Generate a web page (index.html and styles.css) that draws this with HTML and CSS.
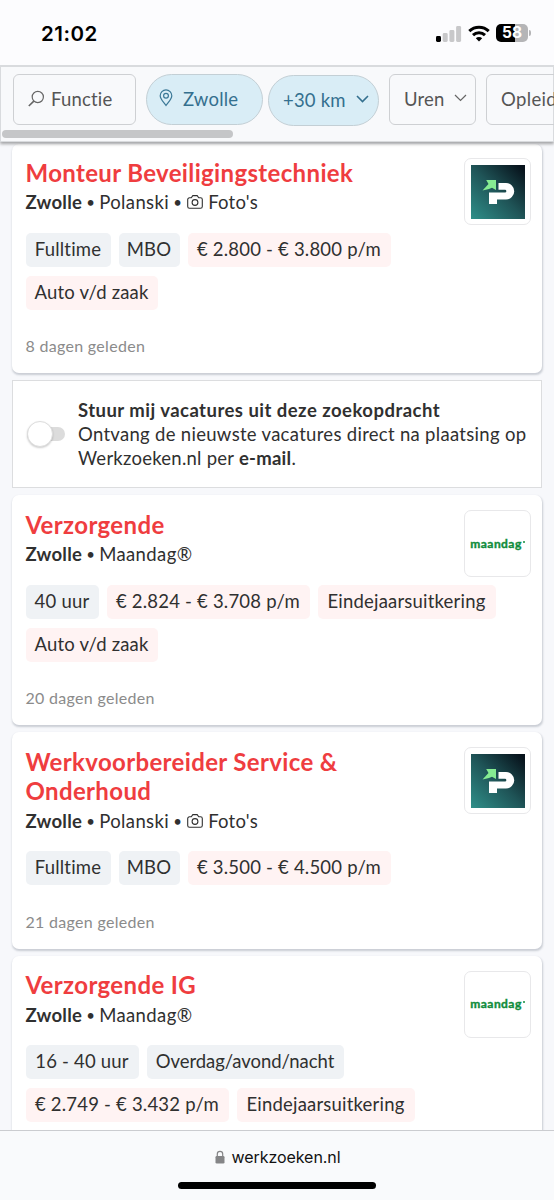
FILE: index.html
```
<!DOCTYPE html>
<html lang="nl">
<head>
<meta charset="utf-8">
<title>Werkzoeken.nl</title>
<link rel="stylesheet" href="styles.css">
</head>
<body>
<svg width="0" height="0" class="defs">
  <defs>
    <linearGradient id="teal" x1="0" y1="1" x2="1" y2="0"><stop offset="0" stop-color="#2f8f89"/><stop offset=".5" stop-color="#1f5457"/><stop offset=".95" stop-color="#07121b"/></linearGradient>
    <symbol id="polanski" viewBox="0 0 54 54"><rect width="54" height="54" fill="url(#teal)"/><path d="M11.500 25.500 17.500 19l-2.300-4H25v10l-4-2.200-3 1.200z" fill="#86ec92"/><path d="M27.500 18H35a8 8 0 0 1 0 16.500h-9V39h-8V27.500h16a1.300 1.300 0 0 0 0-2.700h-6.500z" fill="#fff"/></symbol>
    <symbol id="camera" viewBox="0 0 16 16"><g fill="none" stroke="currentColor" stroke-width="1.100" stroke-linejoin="round"><path d="M2.500 3.800h1.800L5.800 1.600h4.400l1.500 2.200h1.800a1.800 1.800 0 0 1 1.800 1.800v6.800a1.800 1.800 0 0 1-1.800 1.800h-11a1.800 1.800 0 0 1-1.800-1.800V5.600a1.800 1.800 0 0 1 1.800-1.800z"/><circle cx="8" cy="8.500" r="2.900"/></g></symbol>
  </defs>
</svg>
<div class="phone">
  <header class="status">
    <span class="clock">21:02</span>
    <div class="indicators">
      <svg width="26" height="17" viewBox="0 0 26 17"><rect x="0" y="11" width="5" height="6" rx="1.400" fill="#000"/><g fill="#c8c8ca"><rect x="6.700" y="8" width="5" height="9" rx="1.400"/><rect x="13.400" y="5" width="5" height="12" rx="1.400"/><rect x="20.100" y="1" width="5" height="16" rx="1.400"/></g></svg>
      <svg width="22" height="17" viewBox="0 0 22 17"><g fill="none" stroke="#000" stroke-width="3"><path d="M1.300 6.200a14 14 0 0 1 19.400 0"/><path d="M5 10.200a8.700 8.700 0 0 1 12 0"/></g><path d="M7.800 13.300a4.600 4.600 0 0 1 6.400 0L11 16.600z"/></svg>
      <div class="battery"><span>58</span></div>
    </div>
  </header>
  <nav class="filters">
    <div class="filter f-functie"><svg width="18" height="18" viewBox="0 0 18 18" fill="none" stroke="#666" stroke-width="1.200"><circle cx="10.800" cy="7" r="5.600"/><path d="m6.800 11.200-5 4.800" stroke-width="1.600"/></svg><span>Functie</span></div>
    <div class="filter pill f-plaats"><svg width="14" height="18" viewBox="0 0 14 18" fill="none" stroke="#3b7897" stroke-width="1.200"><path d="M7 16.500C4.500 13 1.200 10 1.200 6.700a5.800 5.800 0 0 1 11.600 0C12.800 10 9.500 13 7 16.500z"/><circle cx="7" cy="6.700" r="2.400"/></svg><span>Zwolle</span></div>
    <div class="filter pill f-km"><span>+30 km</span><svg width="13" height="8" viewBox="0 0 13 8" fill="none" stroke="#34708f" stroke-width="1.600"><path d="m1 1 5.500 5.500L12 1"/></svg></div>
    <div class="filter f-uren"><span>Uren</span><svg width="13" height="8" viewBox="0 0 13 8" fill="none" stroke="#666" stroke-width="1.200"><path d="m1 1 5.500 5.500L12 1"/></svg></div>
    <div class="filter f-opl"><span>Opleiding</span></div>
    <i class="scroll"></i>
  </nav>
  <main class="list">
    <article class="card">
      <div class="logo"><svg width="54" height="54"><use href="#polanski"/></svg></div>
      <h2>Monteur Beveiligingstechniek</h2>
      <p class="meta"><b>Zwolle</b><i>•</i><span>Polanski</span><i>•</i><svg width="16" height="16"><use href="#camera"/></svg><span>Foto's</span></p>
      <div class="tags"><span class="tag w-full">Fulltime</span><span class="tag w-mbo">MBO</span><span class="tag pink w-pay">€ 2.800 - € 3.800 p/m</span><span class="tag pink w-auto">Auto v/d zaak</span></div>
      <time>8 dagen geleden</time>
    </article>
    <section class="alert">
      <div class="switch"></div>
      <p><b class="lead">Stuur mij vacatures uit deze zoekopdracht</b><br>Ontvang de nieuwste vacatures direct na plaatsing op<br><span class="tight">Werkzoeken.nl per <b>e-mail</b>.</span></p>
    </section>
    <article class="card">
      <div class="logo brand"><span>maandag</span><i></i></div>
      <h2>Verzorgende</h2>
      <p class="meta"><b>Zwolle</b><i>•</i><span>Maandag®</span></p>
      <div class="tags"><span class="tag w-40">40 uur</span><span class="tag pink w-pay">€ 2.824 - € 3.708 p/m</span><span class="tag pink w-eind">Eindejaarsuitkering</span><span class="tag pink w-auto">Auto v/d zaak</span></div>
      <time>20 dagen geleden</time>
    </article>
    <article class="card">
      <div class="logo"><svg width="54" height="54"><use href="#polanski"/></svg></div>
      <h2>Werkvoorbereider Service &amp;<br>Onderhoud</h2>
      <p class="meta"><b>Zwolle</b><i>•</i><span>Polanski</span><i>•</i><svg width="16" height="16"><use href="#camera"/></svg><span>Foto's</span></p>
      <div class="tags"><span class="tag w-full">Fulltime</span><span class="tag w-mbo">MBO</span><span class="tag pink w-pay">€ 3.500 - € 4.500 p/m</span></div>
      <time>21 dagen geleden</time>
    </article>
    <article class="card last">
      <div class="logo brand"><span>maandag</span><i></i></div>
      <h2>Verzorgende IG</h2>
      <p class="meta"><b>Zwolle</b><i>•</i><span>Maandag®</span></p>
      <div class="tags"><span class="tag w-1640">16 - 40 uur</span><span class="tag w-dag">Overdag/avond/nacht</span><span class="tag pink w-pay">€ 2.749 - € 3.432 p/m</span><span class="tag pink w-eind">Eindejaarsuitkering</span></div>
    </article>
  </main>
  <footer class="browser">
    <div class="address"><svg width="10" height="14" viewBox="0 0 10 14"><path d="M2.300 7V4a2.700 2.700 0 0 1 5.400 0v3" fill="none" stroke="#858587" stroke-width="1.200"/><rect x=".5" y="6" width="9" height="7.500" rx="1.300" fill="#858587"/></svg><span>werkzoeken.nl</span></div>
    <div class="home"></div>
  </footer>
</div>
</body>
</html>
```
FILE: styles.css
```
* { box-sizing: border-box; }
body { margin: 0; background: #f7f8fb; font-family: Lato, "Open Sans", sans-serif; color: #303030; }
.defs { position: absolute; }
.phone { width: 554px; height: 1200px; overflow: hidden; display: flex; flex-direction: column; }
.status { height: 65px; flex: none; background: #fcfcfe; display: flex; justify-content: space-between; padding: 21px 23px 0 41px; }
.clock { font: 600 20.500px/25px Inter, sans-serif; letter-spacing: .5px; color: #000; }
.indicators { display: flex; gap: 6px; padding-top: 4px; }
.battery { position: relative; width: 32px; height: 18px; margin-top: -1px; border-radius: 5px; background: linear-gradient(90deg, #000 59%, #b5b5b7 59%); color: #fff; text-align: center; font: 700 15.500px/18px Inter, sans-serif; margin-right: 3px; }
.battery::after { content: ""; position: absolute; right: -3px; top: 6px; width: 2px; height: 6px; border-radius: 0 2px 2px 0; background: #b5b5b7; }
.filters { position: relative; z-index: 2; flex: none; height: 77px; border: 1px solid #d9dbde; border-top-width: 2px; background: #f8f9fb; box-shadow: 0 2px 3px rgba(0,0,0,.35); display: flex; padding: 7px 0 0 12px; clip-path: inset(0 0 -6px 0); }
.filter { flex: none; height: 51px; border: 1.500px solid #ced0d3; border-radius: 6px; display: flex; align-items: center; padding-bottom: 2px; color: #555; font-size: 18.500px; letter-spacing: .2px; }
.pill { border-radius: 26px; background: #d9edf6; border-color: #c3cfd5; color: #34708f; }
.f-functie { width: 123px; padding-left: 13px; gap: 6px; margin-right: 10px; }
.f-plaats { width: 117px; padding-left: 12px; gap: 10px; margin-right: 5px; }
.f-plaats svg { margin-top: -2px; }
.f-km { width: 111px; padding-left: 14px; gap: 10px; margin: 1px 10px 0 0; }
.f-uren { width: 87px; padding-left: 14px; gap: 9px; margin-right: 10px; }
.f-uren svg, .f-km svg { margin-top: -1px; }
.f-opl { width: 110px; padding-left: 14px; letter-spacing: .35px; }
.scroll { position: absolute; left: 1px; bottom: 3px; width: 231px; height: 8px; border-radius: 4px; background: #c5c6c8; }
.list { height: 988px; flex: none; overflow: hidden; padding: 1.500px 12px 0; display: flex; flex-direction: column; gap: 7px; }
.card { flex: none; width: 530px; padding: 14.500px 13px 16px 13.500px; background: #fff; border-radius: 7px; box-shadow: .5px 1.500px 2px rgba(60,70,90,.24); }
.last { min-height: 230px; }
.logo { float: right; width: 67px; height: 67px; border: 1.500px solid #e8e8ea; border-radius: 7px; display: flex; align-items: center; justify-content: center; margin: .3px -2px 0 0; }
.brand { color: #118c3b; font: 700 12px/14px Lato, sans-serif; letter-spacing: .45px; -webkit-text-stroke: .4px #118c3b; }
.brand i { width: 2px; height: 2px; border-radius: 1px; background: #118c3b; margin: -4px 0 0 1px; }
h2 { margin: 0; font: 700 24px/29.500px Lato, sans-serif; color: #ef3d3f; letter-spacing: .35px; white-space: nowrap; }
.meta { margin: 2.900px 0 18.600px; height: 24px; display: flex; align-items: center; font-size: 18.500px; letter-spacing: .25px; }
.meta i { font-style: normal; font-size: 15px; margin: 0 4px; }
.meta span:nth-of-type(1) { letter-spacing: .4px; }
.meta svg { margin: 0 5px 0 1px; }
.tags { display: flex; flex-wrap: wrap; gap: 9px 8px; }
.tag { height: 34px; border-radius: 5px; background: #eff2f5; font-size: 18.500px; line-height: 33px; text-align: center; letter-spacing: .2px; white-space: nowrap; }
.pink { background: #fff3f3; }
.w-full { width: 85px; } .w-mbo { width: 61px; } .w-pay { width: 203px; } .w-auto { width: 132px; }
.w-40 { width: 73px; } .w-eind { width: 178px; } .w-1640 { width: 113px; } .w-dag { width: 197px; letter-spacing: -.05px; }
time { display: block; margin-top: 25.500px; font-size: 16px; line-height: 22px; color: #8b8b8b; letter-spacing: .3px; }
.alert { flex: none; width: 530px; height: 108px; border: 1.500px solid #dcdddf; background: #fff; display: flex; align-items: center; padding-left: 14px; }
.alert p { margin: 0; font-size: 18.500px; line-height: 24px; letter-spacing: .3px; white-space: nowrap; }
.alert .lead { letter-spacing: .47px; }
.alert .tight { letter-spacing: .25px; }
.switch { width: 38px; height: 14px; border-radius: 7px; background: #dcdcdc; margin-right: 13px; position: relative; flex: none; }
.switch::before { content: ""; position: absolute; left: 0; top: -6px; width: 24px; height: 24px; border-radius: 50%; background: #fff; border: 1px solid #ddd; box-shadow: 0 1px 2px rgba(0,0,0,.2); }
.browser { flex: none; height: 70px; border-top: 1px solid #cbccd0; background: #f9fafc; display: flex; flex-direction: column; align-items: center; }
.address { display: flex; align-items: center; gap: 6px; height: 51px; padding-left: 2px; color: #111; font: 400 16px/24px Inter, sans-serif; letter-spacing: -.05px; }
.home { width: 198px; height: 7px; border-radius: 4px; background: #000; }
```
